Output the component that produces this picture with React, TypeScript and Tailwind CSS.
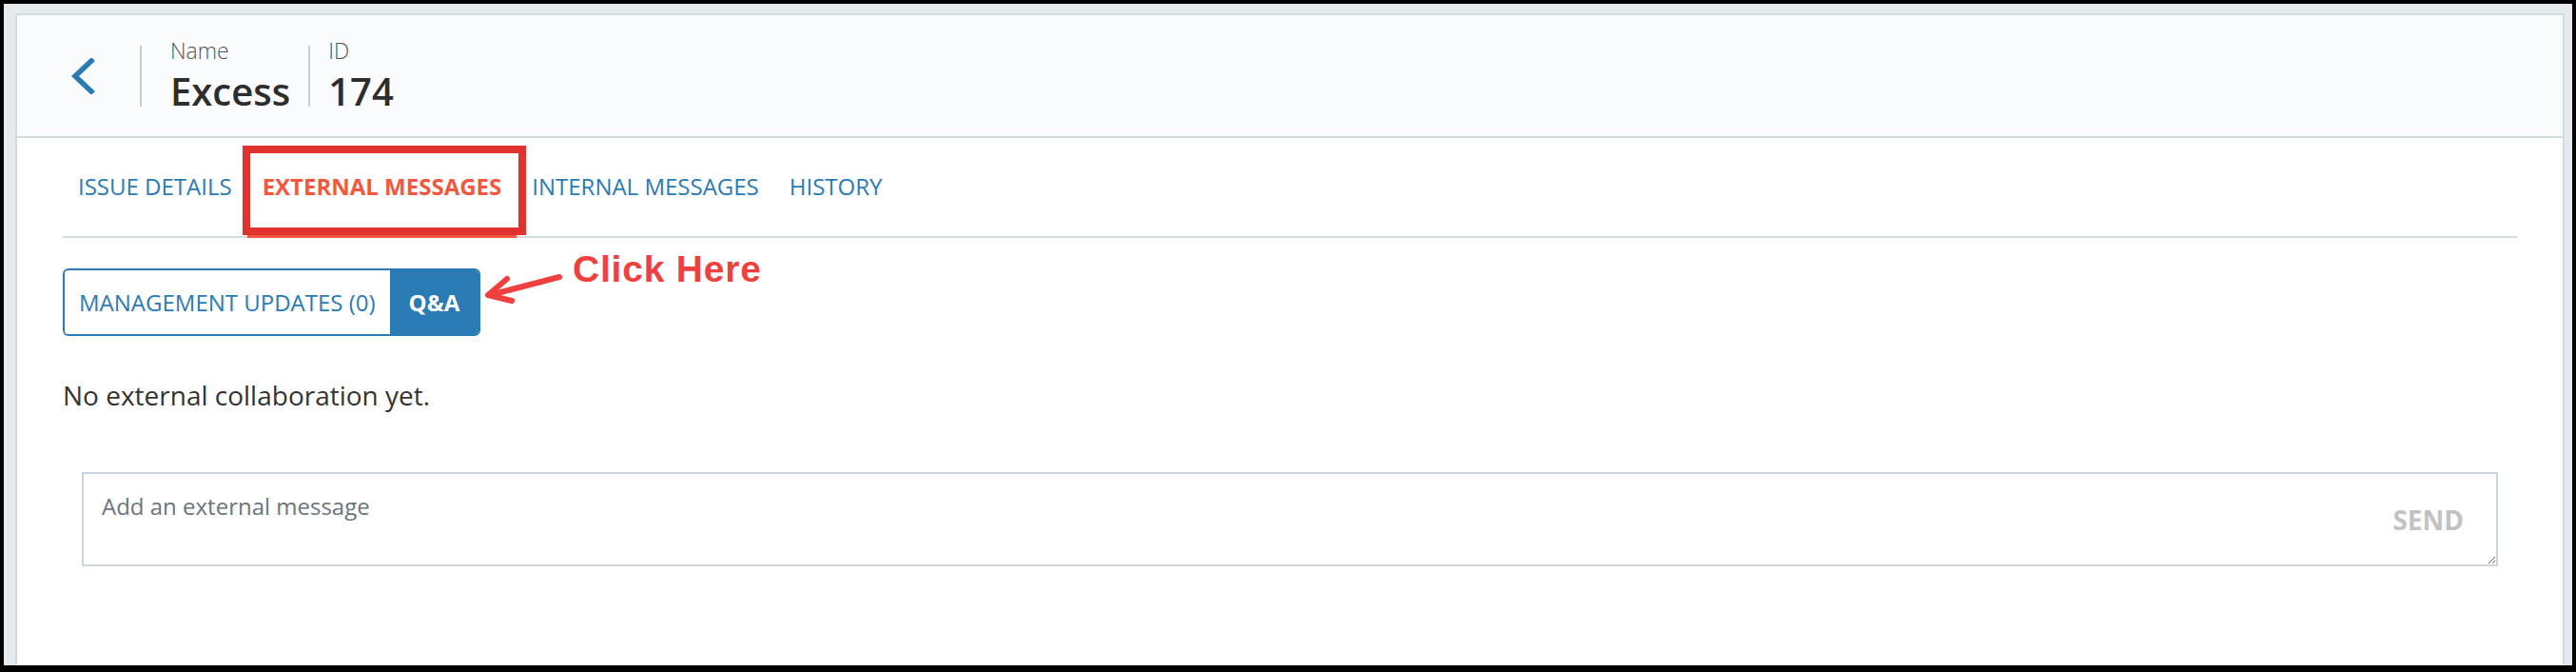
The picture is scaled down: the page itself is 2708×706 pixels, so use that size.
import React from "react";

const tabs = ["ISSUE DETAILS", "EXTERNAL MESSAGES", "INTERNAL MESSAGES", "HISTORY"];

const BackChevron = () => (
  <svg width="26" height="38" viewBox="0 0 26 38" fill="none">
    <polyline
      points="22,3 5,19 22,35"
      stroke="#2a7bb4"
      strokeWidth="5.5"
      strokeLinecap="square"
      strokeLinejoin="miter"
    />
  </svg>
);

const HeaderField = ({ label, value }: { label: string; value: string }) => (
  <div className="flex flex-col">
    <span className="pt-[2px] text-[23px] leading-[31px] font-light text-[#555]">{label}</span>
    <span className="text-[40px] leading-[54px] font-semibold text-[#2d2d2d]">{value}</span>
  </div>
);

export default function App() {
  return (
    <div className="relative w-[2708px] h-[706px] bg-black pt-1 pl-1 pr-1 pb-[7px] font-['Open_Sans',sans-serif]">
      <div className="h-full bg-[#e5eaed] pt-[10px] pl-3 pr-2 flex flex-col">
        <div className="flex-1 bg-white border-2 border-b-0 border-[#d2dbde] flex flex-col overflow-hidden">
          {/* header */}
          <div className="h-[129px] shrink-0 bg-[#f9fbfc] border-b-2 border-[#d2dbde] flex items-center pl-[56px]">
            <BackChevron />
            <div className="ml-[47px] w-[2px] h-[64px] bg-[#c9cbcd]" />
            <div className="ml-[30px]">
              <HeaderField label="Name" value="Excess" />
            </div>
            <div className="ml-[19px] w-[2px] h-[64px] bg-[#c9cbcd]" />
            <div className="ml-[19px]">
              <HeaderField label="ID" value="174" />
            </div>
          </div>

          <div className="px-12">
            {/* tabs */}
            <div className="flex border-b-2 border-[#d5dde0]">
              {tabs.map((t) => {
                const active = t === "EXTERNAL MESSAGES";
                return (
                  <div
                    key={t}
                    className={
                      active
                        ? "h-[105px] -mb-[2px] px-4 flex items-center text-[24px] font-bold text-[#f4573f] border-b-[3px] border-[#f4573f]"
                        : "h-[105px] -mb-[2px] px-4 flex items-center text-[24px] text-[#2a7bb4] border-b-[3px] border-transparent"
                    }
                  >
                    {t}
                  </div>
                );
              })}
            </div>

            {/* segmented buttons */}
            <div className="mt-8 inline-flex h-[71px] border-2 border-[#2a7bb4] rounded-md overflow-hidden">
              <div className="px-[15px] flex items-center text-[24px] text-[#2a7bb4] bg-white">
                MANAGEMENT UPDATES (0)
              </div>
              <div className="px-5 flex items-center text-[24px] font-bold text-white bg-[#2a7bb4]">
                Q&amp;A
              </div>
            </div>

            <p className="mt-[42px] text-[28px] leading-[40px] text-[#333]">
              No external collaboration yet.
            </p>

            {/* message box */}
            <div className="relative mt-[61px] mx-5">
              <textarea
                placeholder="Add an external message"
                className="block w-full h-[99px] border-2 border-[#cdd3d8] px-[19px] pt-4 text-[24px] leading-[36px] text-[#333] placeholder:text-[#6b7580] outline-none"
              />
              <div className="absolute inset-y-0 right-9 flex items-center text-[28px] font-bold text-[#c2c2c2]">
                SEND
              </div>
            </div>
          </div>
        </div>
      </div>

      {/* annotation overlays */}
      <div className="absolute left-[255px] top-[153px] w-[298px] h-[94px] border-[8px] border-[#e0332f]" />
      <svg className="absolute left-[505px] top-[283px]" width="95" height="40" viewBox="0 0 95 40" fill="none">
        <g stroke="#ef4040" strokeWidth="6" strokeLinecap="round" strokeLinejoin="round">
          <line x1="83" y1="8" x2="10" y2="27" />
          <polyline points="28,10 8,27 33,33" />
        </g>
      </svg>
      <div className="absolute left-[602px] top-[261px] text-[39px] leading-[44px] font-bold tracking-[0.8px] text-[#ef4040] font-['Liberation_Sans',Arial,sans-serif]">
        Click Here
      </div>
    </div>
  );
}
